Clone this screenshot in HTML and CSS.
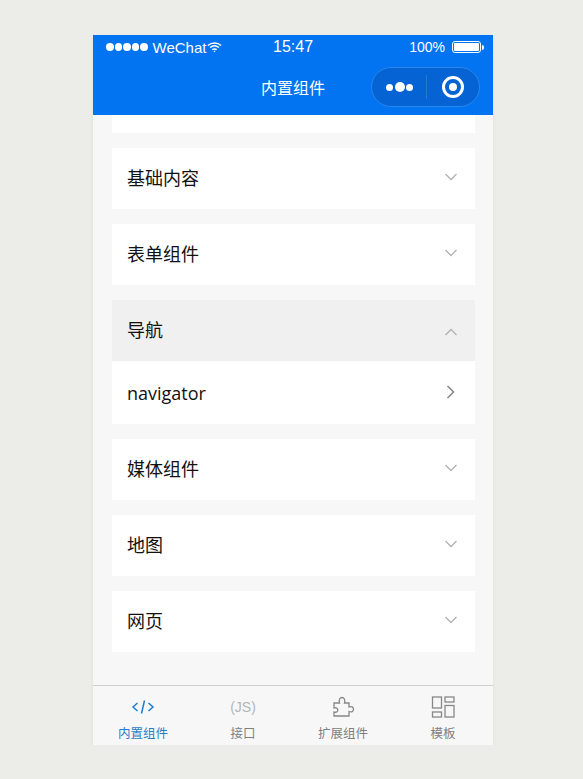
FILE: index.html
```html
<!DOCTYPE html>
<html lang="zh-CN">
<head>
  <meta charset="UTF-8">
  <meta name="viewport" content="width=device-width, initial-scale=1.0">
  <title>内置组件</title>
  <link rel="stylesheet" href="styles.css">
</head>
<body>
  <div class="phone">
    <header class="header">
      <div class="status">
        <div class="status-left">
          <span class="signal"><i></i><i></i><i></i><i></i><i></i></span>
          <span class="carrier">WeChat</span>
          <svg class="wifi" width="15" height="12" viewBox="0 0 17 12" fill="none" stroke="#fff" stroke-width="1.6">
            <path d="M1 4.2C5.2.6 11.800.6 16 4.200"/>
            <path d="M3.500 6.600c2.900-2.300 7.100-2.300 10 0"/>
            <path d="M6 9c1.500-1 3.500-1 5 0"/>
            <path d="M8.500 11.900 7.300 10.600c.7-.4 1.700-.4 2.400 0z" fill="#fff" stroke="none"/>
          </svg>
        </div>
        <div class="status-time">15:47</div>
        <div class="status-right">
          <span>100%</span>
          <span class="battery"><i></i></span>
          <span class="battery-tip"></span>
        </div>
      </div>
      <div class="nav">
        <div class="nav-title">内置组件</div>
        <div class="capsule">
          <div class="capsule-more"><i></i><i class="big"></i><i></i></div>
          <div class="capsule-line"></div>
          <div class="capsule-home"><i></i></div>
        </div>
      </div>
    </header>

    <main class="list">
      <div class="card card-cut"></div>
      <div class="card">
        <div class="row">
          <span>基础内容</span>
          <svg class="arrow" width="14" height="8" viewBox="0 0 14 8"><path d="M1.500 1 7 6.500 12.500 1"/></svg>
        </div>
      </div>
      <div class="card">
        <div class="row">
          <span>表单组件</span>
          <svg class="arrow" width="14" height="8" viewBox="0 0 14 8"><path d="M1.500 1 7 6.500 12.500 1"/></svg>
        </div>
      </div>
      <div class="card">
        <div class="row row-open">
          <span>导航</span>
          <svg class="arrow" width="14" height="8" viewBox="0 0 14 8"><path d="M1.500 7 7 1.500 12.500 7"/></svg>
        </div>
        <div class="row row-sub">
          <span>navigator</span>
          <svg class="arrow-right" width="9" height="14" viewBox="0 0 9 14"><path d="M1.500 1 7.500 7 1.500 13"/></svg>
        </div>
      </div>
      <div class="card">
        <div class="row">
          <span>媒体组件</span>
          <svg class="arrow" width="14" height="8" viewBox="0 0 14 8"><path d="M1.500 1 7 6.500 12.500 1"/></svg>
        </div>
      </div>
      <div class="card">
        <div class="row">
          <span>地图</span>
          <svg class="arrow" width="14" height="8" viewBox="0 0 14 8"><path d="M1.500 1 7 6.500 12.500 1"/></svg>
        </div>
      </div>
      <div class="card">
        <div class="row">
          <span>网页</span>
          <svg class="arrow" width="14" height="8" viewBox="0 0 14 8"><path d="M1.500 1 7 6.500 12.500 1"/></svg>
        </div>
      </div>
    </main>

    <footer class="tabbar">
      <div class="tab tab-active">
        <svg width="24" height="20" viewBox="0 0 24 20" fill="none" stroke="#1a7fd6" stroke-width="1.500">
          <path d="M6.500 6 2 10l4.500 4"/>
          <path d="M17.500 6 22 10l-4.500 4"/>
          <path d="M13.500 3.500 10.500 16.500"/>
        </svg>
        <span>内置组件</span>
      </div>
      <div class="tab">
        <span class="tab-js">(JS)</span>
        <span>接口</span>
      </div>
      <div class="tab">
        <svg width="24" height="22" viewBox="0 0 24 22" fill="none" stroke="#888" stroke-width="1.300">
          <path d="M3 7h5.500C7.500 3.500 9 1.500 11 1.500S14.500 3.500 13.500 7H18v4c2.500-1 4.500 0 4.500 2.200s-2 3.300-4.500 2.300v4.500H3v-4c2.300.8 3.800-.3 3.800-2S5.300 11.300 3 12z"/>
        </svg>
        <span>扩展组件</span>
      </div>
      <div class="tab">
        <svg width="24" height="22" viewBox="0 0 24 22" fill="none" stroke="#888" stroke-width="1.300">
          <rect x="1.500" y="1" width="9" height="11"/>
          <rect x="14" y="1" width="9" height="5"/>
          <rect x="1.500" y="16" width="9" height="5"/>
          <rect x="14" y="9.500" width="9" height="11.500"/>
        </svg>
        <span>模板</span>
      </div>
    </footer>
  </div>
</body>
</html>
```

FILE: styles.css
```css
* {
  box-sizing: border-box;
}
body {
  margin: 0;
  background-color: #ecece8;
  font-family: "Liberation Sans", "Noto Sans CJK SC", sans-serif;
}
.phone {
  width: 400px;
  height: 710px;
  margin: 35px 0 0 93px;
  background-color: #f7f7f7;
  display: flex;
  flex-direction: column;
  box-shadow: 0 2px 4px rgba(0,0,0,0.06);
}

/* header */
.header {
  height: 80px;
  background-color: #0273f1;
  color: #fff;
}
.status {
  height: 24px;
  padding: 0 9px 0 13px;
  display: flex;
  align-items: center;
  font-size: 14px;
}
.status-left {
  width: 167px;
  display: flex;
  align-items: center;
  gap: 5px;
}
.carrier {
  font-size: 15px;
}
.signal {
  display: flex;
  gap: 1px;
}
.signal i {
  width: 7.500px;
  height: 8px;
  border-radius: 50%;
  background-color: #fff;
}
.wifi {
  margin-left: -4px;
}
.status-time {
  font-size: 16px;
}
.status-right {
  margin-left: auto;
  display: flex;
  align-items: center;
}
.battery {
  width: 29px;
  height: 12px;
  margin-left: 7px;
  padding: 1px;
  border: 1px solid #fff;
  border-radius: 3px;
}
.battery i {
  display: block;
  height: 100%;
  background-color: #fff;
  border-radius: 1px;
}
.battery-tip {
  width: 2px;
  height: 5px;
  margin-left: 1px;
  background-color: #fff;
  border-radius: 0 2px 2px 0;
}
.nav {
  height: 56px;
  position: relative;
  display: flex;
  align-items: center;
  justify-content: center;
  padding-bottom: 1px;
}
.nav-title {
  font-size: 16px;
}
.capsule {
  position: absolute;
  right: 13px;
  top: 8px;
  width: 109px;
  height: 40px;
  border: 1px solid #2b86ec;
  border-radius: 20px;
  background-color: #0563d3;
  display: flex;
  align-items: center;
}
.capsule-more {
  width: 54px;
  padding-left: 1px;
  display: flex;
  align-items: center;
  justify-content: center;
  gap: 1.500px;
}
.capsule-more i {
  width: 7px;
  height: 7px;
  border-radius: 50%;
  background-color: #fff;
}
.capsule-more i.big {
  width: 10px;
  height: 10px;
}
.capsule-line {
  width: 1px;
  height: 24px;
  background-color: #2b76cf;
}
.capsule-home {
  width: 22px;
  height: 22px;
  margin-left: 15px;
  border: 3px solid #fff;
  border-radius: 50%;
  display: flex;
  align-items: center;
  justify-content: center;
}
.capsule-home i {
  width: 8px;
  height: 8px;
  border-radius: 50%;
  background-color: #fff;
}

/* list */
.list {
  flex: 1;
  padding: 0 18px 0 19px;
  display: flex;
  flex-direction: column;
  gap: 15px;
}
.card {
  background-color: #fff;
}
.card-cut {
  height: 18px;
}
.row {
  height: 61px;
  padding: 0 17px 4px 15px;
  display: flex;
  align-items: center;
  justify-content: space-between;
  font-size: 18px;
  color: #111;
}
.row-open {
  background-color: #f0f0f0;
  margin-bottom: 1px;
}
.row-open .arrow {
  margin-top: 6px;
}
.row-sub {
  height: 62px;
  padding: 0 20px 0 15px;
  font-family: "Open Sans", sans-serif;
  font-size: 18px;
}
.arrow, .arrow-right {
  fill: none;
  stroke-width: 1.300;
}
.arrow {
  stroke: #b2b2b2;
}
.arrow-right {
  stroke: #888;
  stroke-width: 1.600;
  margin-top: -2px;
}

/* tabs */
.tabbar {
  height: 60px;
  background-color: #f7f7f7;
  border-top: 1px solid #cfcfcf;
  display: flex;
}
.tab {
  flex: 1;
  padding-top: 10px;
  display: flex;
  flex-direction: column;
  align-items: center;
  justify-content: flex-start;
  font-size: 12.500px;
  line-height: 14px;
  color: #808080;
}
.tab svg, .tab-js {
  height: 22px;
  margin-bottom: 9px;
}
.tab-active {
  color: #2a7cc7;
}
.tab-js {
  font-size: 14px;
  line-height: 22px;
  color: #b5b5b5;
}
```
